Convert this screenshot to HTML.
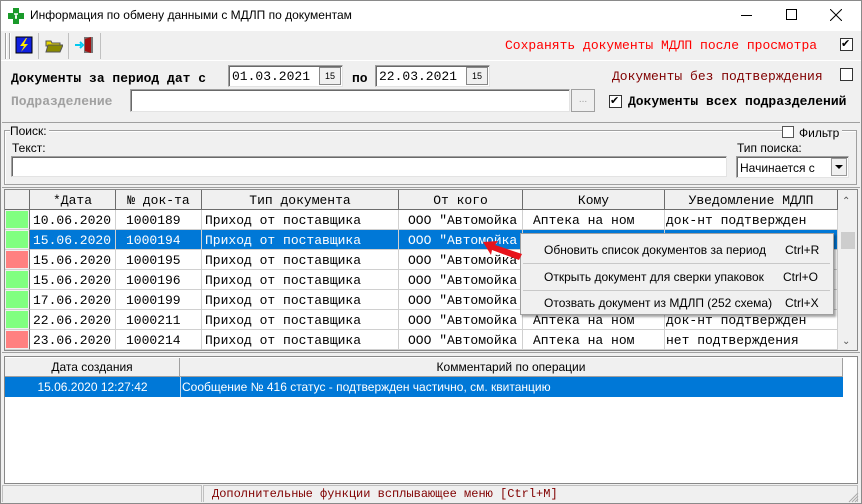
<!DOCTYPE html>
<html><head><meta charset="utf-8"><style>
*{margin:0;padding:0;box-sizing:border-box}
body{width:862px;height:504px;background:#f0f0f0;position:relative;overflow:hidden;font-family:"Liberation Sans",sans-serif;font-size:12px;color:#000}
.a{position:absolute}
.m{font-family:"Liberation Mono",monospace;font-size:13px;white-space:nowrap}
.s{font-family:"Liberation Sans",sans-serif;font-size:12px;white-space:nowrap}
.in{background:#fff;border:1px solid #a0a0a0;border-right-color:#e3e3e3;border-bottom-color:#e3e3e3;box-shadow:inset 1px 1px 0 #696969}
.cb{width:13px;height:13px;border:1px solid #333;background:#fff}
.cell{position:absolute;height:20px;border-right:1px solid #d0d0d0;border-bottom:1px solid #d0d0d0;padding:3px 0 0 3px;overflow:hidden}
.hd{position:absolute;height:20px;background:#f0f0f0;border-right:1px solid #6c6c6c;border-bottom:1px solid #6c6c6c;text-align:center;padding-top:3px}
</style></head><body>
<div class="a" style="left:0;top:0;width:862px;height:504px;border:1px solid #8a8a8a"></div>
<!-- title -->
<div class="a" style="left:1px;top:1px;width:860px;height:30px;background:#fff"></div>
<svg class="a" style="left:8px;top:8px" width="16" height="16"><path d="M5 0h6v5h5v6h-5v5H5v-5H0V5h5z" fill="#1a9a2a"/><path d="M6 6h4M8 6v5M7 9h2" stroke="#fff" stroke-width="1.5"/></svg>
<div class="a s" style="left:30px;top:8px;font-size:12px">Информация по обмену данными с МДЛП по документам</div>
<div class="a" style="left:741px;top:15px;width:11px;height:1px;background:#000"></div>
<div class="a" style="left:786px;top:9px;width:11px;height:11px;border:1px solid #000"></div>
<svg class="a" style="left:830px;top:9px" width="12" height="12"><path d="M0 0L12 12M12 0L0 12" stroke="#000"/></svg>
<!-- toolbar -->
<div class="a" style="left:5px;top:33px;width:2px;height:26px;border-left:1px solid #a0a0a0;border-right:1px solid #fff"></div>
<div class="a" style="left:9px;top:33px;width:2px;height:26px;border-left:1px solid #a0a0a0;border-right:1px solid #fff"></div>
<svg class="a" style="left:15px;top:36px" width="18" height="18"><rect x="1" y="1" width="16" height="16" fill="#1020e0" stroke="#000"/><path d="M11 2L5 10h4l-3 6 7-8H9l3-6z" fill="#ffea00"/></svg>
<div class="a" style="left:38px;top:33px;width:1px;height:26px;background:#c0c0c0"></div>
<svg class="a" style="left:45px;top:38px" width="18" height="15"><path d="M1 3h5l1 2h8v3H1z" fill="#e8d800" stroke="#555"/><path d="M1 14L3 7h15l-3 7z" fill="#8a8a00" stroke="#555"/></svg>
<div class="a" style="left:68px;top:33px;width:1px;height:26px;background:#c0c0c0"></div>
<svg class="a" style="left:75px;top:35px" width="20" height="20"><path d="M0 10h6M5 7l3 3-3 3" stroke="#00c8f0" stroke-width="2" fill="none"/><rect x="9" y="2" width="9" height="16" fill="#777"/><path d="M10 4l6-2v16l-6-2z" fill="#a01010"/></svg>
<div class="a" style="left:100px;top:33px;width:1px;height:26px;background:#c0c0c0"></div>
<div class="a m" style="left:505px;top:38px;color:#f00">Сохранять документы МДЛП после просмотра</div>
<div class="a cb" style="left:840px;top:38px;font-size:11px;line-height:11px">✔</div>
<div class="a" style="left:1px;top:60px;width:860px;height:1px;background:#fff"></div>
<!-- panel -->
<div class="a m" style="left:11px;top:71px;font-weight:bold">Документы за период дат с</div>
<div class="a in" style="left:228px;top:65px;width:115px;height:22px"></div>
<div class="a m" style="left:232px;top:69px">01.03.2021</div>
<div class="a" style="left:319px;top:67px;width:22px;height:18px;background:#f0f0f0;border:1px solid #888;font-size:9px;text-align:center;line-height:16px">15</div>
<div class="a m" style="left:352px;top:71px;font-weight:bold">по</div>
<div class="a in" style="left:375px;top:65px;width:115px;height:22px"></div>
<div class="a m" style="left:379px;top:69px">22.03.2021</div>
<div class="a" style="left:466px;top:67px;width:22px;height:18px;background:#f0f0f0;border:1px solid #888;font-size:9px;text-align:center;line-height:16px">15</div>
<div class="a m" style="left:612px;top:69px;color:#800000">Документы без подтверждения</div>
<div class="a cb" style="left:840px;top:68px"></div>
<div class="a m" style="left:11px;top:94px;font-weight:bold;color:#a0a0a0">Подразделение</div>
<div class="a in" style="left:130px;top:89px;width:440px;height:23px"></div>
<div class="a" style="left:571px;top:89px;width:24px;height:23px;border:1px solid #a0a0a0;color:#a0a0a0;text-align:center;font-size:10px;line-height:20px">...</div>
<div class="a cb" style="left:609px;top:95px;font-size:11px;line-height:11px">✔</div>
<div class="a m" style="left:628px;top:94px;font-weight:bold">Документы всех подразделений</div>
<div class="a" style="left:2px;top:122px;width:858px;height:1px;background:#a0a0a0"></div>
<!-- search group -->
<div class="a" style="left:4px;top:130px;width:853px;height:55px;border:1px solid #a0a0a0;box-shadow:1px 1px 0 #fff inset"></div>
<div class="a s" style="left:10px;top:124px;background:#f0f0f0;padding-right:2px">Поиск:</div>
<div class="a s" style="left:12px;top:141px">Текст:</div>
<div class="a in" style="left:11px;top:156px;width:716px;height:21px"></div>
<div class="a" style="left:782px;top:126px;background:#f0f0f0;width:60px;height:12px"></div>
<div class="a cb" style="left:782px;top:126px;width:12px;height:12px;border-color:#555"></div>
<div class="a s" style="left:799px;top:126px">Фильтр</div>
<div class="a s" style="left:737px;top:141px">Тип поиска:</div>
<div class="a in" style="left:736px;top:156px;width:113px;height:22px"></div>
<div class="a s" style="left:740px;top:161px">Начинается с</div>
<div class="a" style="left:831px;top:158px;width:16px;height:18px;background:#f0f0f0;border:1px solid #999"></div>
<svg class="a" style="left:835px;top:165px" width="8" height="5"><path d="M0 0h8L4 4z"/></svg>
<div class="a" style="left:2px;top:187px;width:858px;height:1px;background:#a0a0a0"></div>
<!-- grid -->
<div class="a" style="left:4px;top:189px;width:854px;height:162px;border:1px solid #888;background:#fff"></div>
<div class="hd" style="left:5px;top:190px;width:25px"></div>
<div class="hd m" style="left:30px;top:190px;width:86px">*Дата</div>
<div class="hd m" style="left:116px;top:190px;width:86px">№ док-та</div>
<div class="hd m" style="left:202px;top:190px;width:197px">Тип документа</div>
<div class="hd m" style="left:399px;top:190px;width:124px">От кого</div>
<div class="hd m" style="left:523px;top:190px;width:142px">Кому</div>
<div class="hd m" style="left:665px;top:190px;width:173px">Уведомление МДЛП</div>
<div class="a" style="left:838px;top:190px;width:19px;height:160px;background:#f0f0f0"></div>
<div class="a" style="left:842px;top:196px;font-size:10px;color:#555">⌃</div>
<div class="a" style="left:841px;top:232px;width:14px;height:17px;background:#cdcdcd"></div>
<div class="a" style="left:842px;top:336px;font-size:10px;color:#555">⌄</div>
<div id="rows"></div>
<script>
var d=[["#80ff80","10.06.2020","1000189","док-нт подтвержден"],["#80ff80","15.06.2020","1000194",""],["#ff8080","15.06.2020","1000195",""],["#80ff80","15.06.2020","1000196",""],["#80ff80","17.06.2020","1000199",""],["#80ff80","22.06.2020","1000211","док-нт подтвержден"],["#ff8080","23.06.2020","1000214","нет подтверждения"]];
var h="";
d.forEach(function(r,i){var y=210+i*20,sel=i==1,st=sel?"background:#0078d7;color:#fff;":"";
h+='<div class="cell" style="left:5px;top:'+y+'px;width:25px;background:#f0f0f0;border-right-color:#6c6c6c"><div style="position:absolute;left:1px;top:1px;width:22px;height:17px;background:'+r[0]+'"></div></div>';
h+='<div class="cell m" style="left:30px;top:'+y+'px;width:86px;'+st+'">'+r[1]+'</div>';
h+='<div class="cell m" style="left:116px;top:'+y+'px;width:86px;padding-left:10px;'+st+'">'+r[2]+'</div>';
h+='<div class="cell m" style="left:202px;top:'+y+'px;width:197px;'+st+'">Приход от поставщика</div>';
h+='<div class="cell m" style="left:399px;top:'+y+'px;width:124px;padding-left:9px;'+st+'">ООО "Автомойка</div>';
h+='<div class="cell m" style="left:523px;top:'+y+'px;width:142px;padding-left:10px;'+st+'">'+(sel?'':'Аптека на ном')+'</div>';
h+='<div class="cell m" style="left:665px;top:'+y+'px;width:173px;padding-left:1px;'+st+'">'+r[3]+'</div>';});
document.getElementById("rows").innerHTML=h;
</script>
<!-- popup menu -->
<div class="a" style="left:520px;top:233px;width:314px;height:82px;background:#f0f0f0;border:1px solid #a0a0a0;box-shadow:2px 2px 2px rgba(0,0,0,.35)"></div>
<div class="a s" style="left:544px;top:243px">Обновить список документов за период</div>
<div class="a s" style="left:785px;top:243px">Ctrl+R</div>
<div class="a" style="left:523px;top:263px;width:307px;height:1px;background:#c8c8c8"></div>
<div class="a s" style="left:544px;top:270px">Открыть документ для сверки упаковок</div>
<div class="a s" style="left:783px;top:270px">Ctrl+O</div>
<div class="a" style="left:523px;top:290px;width:307px;height:1px;background:#c8c8c8"></div>
<div class="a s" style="left:544px;top:296px">Отозвать документ из МДЛП (252 схема)</div>
<div class="a s" style="left:785px;top:296px">Ctrl+X</div>
<svg class="a" style="left:478px;top:236px" width="50" height="30"><path d="M5 6L20 5 17 9 44 18 41 24 14 14 13 19z" fill="#e8141c"/></svg>
<!-- lower grid -->
<div class="a" style="left:2px;top:352px;width:858px;height:1px;background:#a0a0a0"></div>
<div class="a" style="left:4px;top:356px;width:854px;height:128px;border:1px solid #888;background:#fff"></div>
<div class="hd s" style="left:5px;top:358px;width:175px;height:19px;border-color:#a0a0a0;padding-top:2px">Дата создания</div>
<div class="hd s" style="left:180px;top:358px;width:663px;height:19px;border-color:#a0a0a0;padding-top:2px">Комментарий по операции</div>
<div class="a" style="left:5px;top:377px;width:838px;height:20px;background:#0078d7"></div>
<div class="a s" style="left:5px;top:380px;width:175px;text-align:center;color:#fff">15.06.2020 12:27:42</div>
<div class="a" style="left:180px;top:377px;width:1px;height:20px;background:#c0d8f0"></div>
<div class="a s" style="left:182px;top:380px;color:#fff">Сообщение № 416 статус -  подтвержден частично, см. квитанцию</div>
<!-- status -->
<div class="a" style="left:2px;top:485px;width:200px;height:17px;border:1px solid #c0c0c0;border-bottom:none"></div>
<div class="a" style="left:203px;top:485px;width:655px;height:17px;border:1px solid #c0c0c0;border-bottom:none"></div>
<div class="a m" style="left:212px;top:487px;color:#800000;font-size:12px">Дополнительные функции всплывающее меню [Ctrl+M]</div>
<svg class="a" style="left:848px;top:492px" width="11" height="11"><path d="M10 1L1 10M10 4L4 10M10 7L7 10" stroke="#aaa"/></svg>
</body></html>
